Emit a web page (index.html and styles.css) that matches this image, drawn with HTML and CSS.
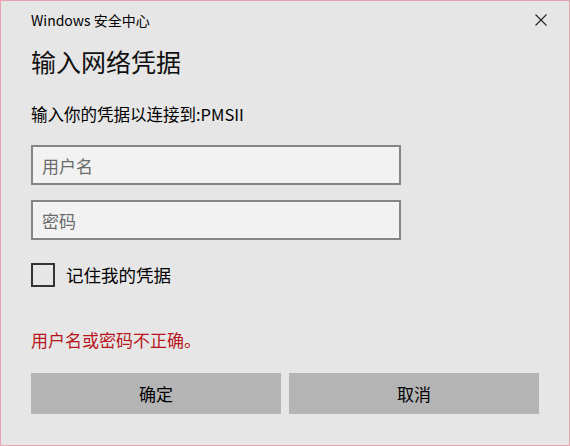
FILE: index.html
```html
<!DOCTYPE html>
<html lang="zh-CN">
<head>
  <meta charset="UTF-8">
  <title>Windows 安全中心</title>
  <link rel="stylesheet" href="styles.css">
</head>
<body>
  <div class="dialog">
    <div class="titlebar">
      <span class="app-name">Windows 安全中心</span>
      <button class="close-btn" aria-label="关闭">
        <svg viewBox="0 0 12 12" class="close-icon">
          <path d="M0.5 0.5L11.5 11.5M11.5 0.5L0.5 11.5" stroke="#222" stroke-width="1.1" fill="none"/>
        </svg>
      </button>
    </div>
    <div class="heading">输入网络凭据</div>
    <div class="subtitle">输入你的凭据以连接到:PMSII</div>
    <div class="fields">
      <input type="text" class="field" placeholder="用户名">
      <input type="password" class="field" placeholder="密码">
    </div>
    <div class="remember">
      <span class="check-box"></span>
      <span class="remember-label">记住我的凭据</span>
    </div>
    <div class="error-text">用户名或密码不正确。</div>
    <div class="actions">
      <button class="action-btn">确定</button>
      <button class="action-btn">取消</button>
    </div>
  </div>
</body>
</html>
```

FILE: styles.css
```css
body {
  margin: 0;
  background: #e6e6e6;
  font-family: "Noto Sans CJK SC", "Noto Sans", sans-serif;
  color: #000;
}
.dialog {
  width: 570px;
  height: 446px;
  box-sizing: border-box;
  border: 1px solid #e7a3b1;
  background: #e6e6e6;
  padding: 0 30px;
  display: flex;
  flex-direction: column;
}
.titlebar {
  height: 38px;
  display: flex;
  align-items: center;
  justify-content: space-between;
}
.app-name {
  font-size: 14px;
  line-height: 20px;
  color: #000;
}
.close-btn {
  width: 24px;
  height: 24px;
  margin-right: -14px;
  padding: 0;
  border: none;
  background: transparent;
  display: flex;
  align-items: center;
  justify-content: center;
}
.close-icon {
  width: 12px;
  height: 12px;
}
.heading {
  margin-top: 6px;
  font-size: 25px;
  line-height: 32px;
  color: #111;
}
.subtitle {
  margin-top: 26px;
  font-size: 16.5px;
  line-height: 22px;
}
.fields {
  margin-top: 20px;
  display: flex;
  flex-direction: column;
  gap: 15px;
}
.field {
  width: 370px;
  height: 40px;
  box-sizing: border-box;
  border: 2px solid #858585;
  background: #f2f2f2;
  padding: 0 9px;
  font-family: inherit;
  font-size: 17px;
  outline: none;
}
.field::placeholder {
  color: #6b6b6b;
}
.remember {
  margin-top: 23px;
  height: 24px;
  display: flex;
  align-items: center;
  gap: 11px;
}
.check-box {
  width: 24px;
  height: 24px;
  box-sizing: border-box;
  border: 2px solid #333;
  background: #e6e6e6;
}
.remember-label {
  font-size: 17.5px;
  line-height: 24px;
}
.error-text {
  margin-top: 42px;
  font-size: 17px;
  line-height: 22px;
  color: #b8161c;
}
.actions {
  margin-top: 22px;
  display: flex;
  gap: 8px;
}
.action-btn {
  flex: 1;
  height: 41px;
  border: none;
  background: #b4b4b4;
  font-family: inherit;
  font-size: 17px;
  color: #000;
  padding: 0;
}
```
